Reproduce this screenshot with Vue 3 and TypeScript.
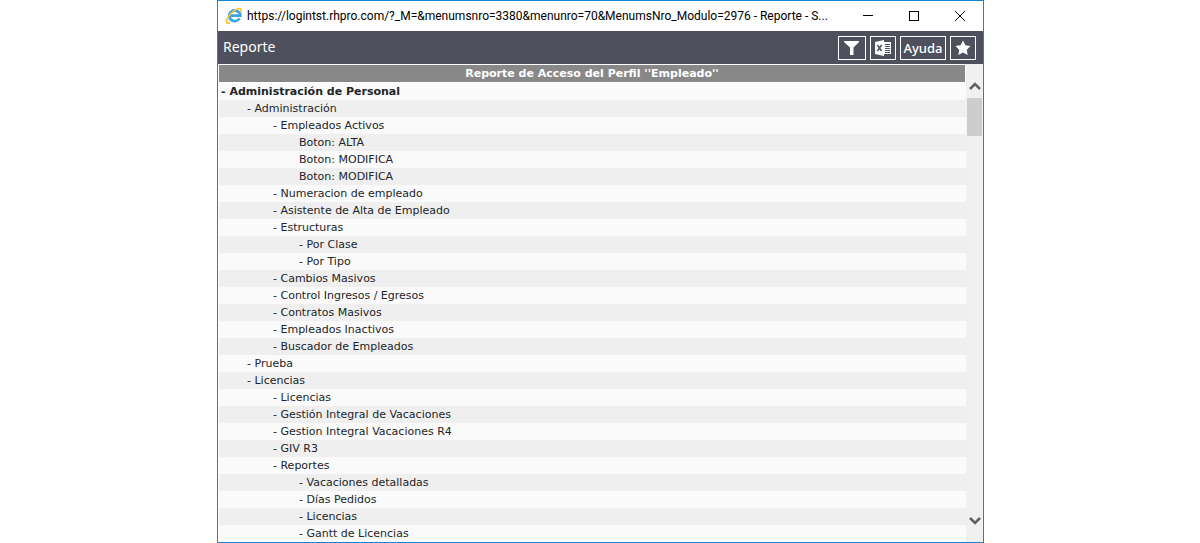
<script setup lang="ts">
interface Row {
  text: string
  level: number
  button?: boolean
}

const rows: Row[] = [
  { text: 'Administración de Personal', level: 0 },
  { text: 'Administración', level: 1 },
  { text: 'Empleados Activos', level: 2 },
  { text: 'Boton: ALTA', level: 3, button: true },
  { text: 'Boton: MODIFICA', level: 3, button: true },
  { text: 'Boton: MODIFICA', level: 3, button: true },
  { text: 'Numeracion de empleado', level: 2 },
  { text: 'Asistente de Alta de Empleado', level: 2 },
  { text: 'Estructuras', level: 2 },
  { text: 'Por Clase', level: 3 },
  { text: 'Por Tipo', level: 3 },
  { text: 'Cambios Masivos', level: 2 },
  { text: 'Control Ingresos / Egresos', level: 2 },
  { text: 'Contratos Masivos', level: 2 },
  { text: 'Empleados Inactivos', level: 2 },
  { text: 'Buscador de Empleados', level: 2 },
  { text: 'Prueba', level: 1 },
  { text: 'Licencias', level: 1 },
  { text: 'Licencias', level: 2 },
  { text: 'Gestión Integral de Vacaciones', level: 2 },
  { text: 'Gestion Integral Vacaciones R4', level: 2 },
  { text: 'GIV R3', level: 2 },
  { text: 'Reportes', level: 2 },
  { text: 'Vacaciones detalladas', level: 3 },
  { text: 'Días Pedidos', level: 3 },
  { text: 'Licencias', level: 3 },
  { text: 'Gantt de Licencias', level: 3 },
]
</script>

<template>
  <div class="page">
    <section class="window">
      <header class="titlebar">
        <svg class="logo" viewBox="0 0 18 18" aria-hidden="true">
          <path d="M14.600 11.400a5.600 5.300 0 1 1 .7-2.700H5.500" fill="none" stroke="#3aa5e6" stroke-width="2.800" />
          <path d="M5 15.800C2.400 17 .8 16 1.600 13.200 2.800 8.800 9 2.800 13.600 1.600c2.400-.6 3 1 2.200 3.600" fill="none" stroke="#f6c52e" stroke-width="1.600" />
        </svg>
        <span class="address">https://logintst.rhpro.com/?_M=&amp;menumsnro=3380&amp;menunro=70&amp;MenumsNro_Modulo=2976 - Reporte - S...</span>
        <div class="controls">
          <button type="button" aria-label="Minimizar">
            <svg viewBox="0 0 12 12" shape-rendering="crispEdges"><path d="M1 5.500h10" /></svg>
          </button>
          <button type="button" aria-label="Maximizar">
            <svg viewBox="0 0 12 12" shape-rendering="crispEdges"><path d="M1.500 1.500h9v9h-9z" /></svg>
          </button>
          <button type="button" aria-label="Cerrar">
            <svg viewBox="0 0 12 12"><path d="M1 1l10 10M11 1L1 11" /></svg>
          </button>
        </div>
      </header>

      <div class="toolbar">
        <h1>Reporte</h1>
        <div class="actions">
          <button class="action filter" type="button" aria-label="Filtro">
            <svg viewBox="0 0 16 16"><path d="M0 1h15v1L9.500 7.500V15H6V7.500L0 2z" fill="#fff" /></svg>
          </button>
          <button class="action" type="button" aria-label="Excel">
            <svg viewBox="0 0 16 16">
              <path d="M0 2l9-2v16l-9-2z" fill="#fff" />
              <path d="M9 2h7v12H9z" fill="#fff" />
              <path d="M10 4.500h5M10 6.500h5M10 8.500h5M10 10.500h5M10 12.500h5" stroke="#4e515d" />
              <path d="M2.500 5l4 6M6.500 5l-4 6" stroke="#4e515d" stroke-width="1.500" />
            </svg>
          </button>
          <button class="action help" type="button">Ayuda</button>
          <button class="action" type="button" aria-label="Favorito">
            <svg viewBox="0 0 16 16"><path d="M8 .5l2.400 4.800 5.200.8-3.800 3.700.9 5.200L8 12.500 3.300 15l.9-5.200L.4 6.100l5.200-.8z" fill="#fff" /></svg>
          </button>
        </div>
      </div>

      <main class="content">
        <table class="report">
          <thead>
            <tr><th scope="col">Reporte de Acceso del Perfil ''Empleado''</th></tr>
          </thead>
          <tbody>
            <tr v-for="(row, i) in rows" :key="i">
              <td :class="`level-${row.level}`"><template v-if="!row.button">- </template>{{ row.text }}</td>
            </tr>
          </tbody>
        </table>
        <div class="scrollbar">
          <button type="button" aria-label="Subir">
            <svg viewBox="0 0 12 10"><path d="M1 8l5-5 5 5" /></svg>
          </button>
          <div class="thumb"></div>
          <button class="down" type="button" aria-label="Bajar">
            <svg viewBox="0 0 12 10"><path d="M1 2l5 5 5-5" /></svg>
          </button>
        </div>
      </main>
    </section>
  </div>
</template>

<style>
body {
  margin: 0;
  background: #fff;
}
</style>

<style scoped>
.page {
  box-sizing: border-box;
  height: 100vh;
  padding: 0 216px 0 217px;
}
.window {
  box-sizing: border-box;
  display: flex;
  flex-direction: column;
  height: 100%;
  border: 1px solid #1883d7;
  overflow: hidden;
  background: #fff;
}
button {
  padding: 0;
  border: 0;
  background: none;
  font: inherit;
  color: inherit;
}
svg {
  display: block;
}
.titlebar {
  display: flex;
  flex: none;
  align-items: center;
  height: 30px;
  padding-left: 7px;
  color: #000;
  font: 12px/16px Roboto, sans-serif;
}
.logo {
  flex: none;
  width: 18px;
  height: 18px;
  margin-right: 4px;
}
.address {
  flex: 1;
  min-width: 0;
  white-space: nowrap;
}
.controls {
  display: flex;
  flex: none;
}
.controls button {
  display: grid;
  place-items: center;
  width: 46px;
  height: 30px;
}
.controls svg {
  width: 12px;
  height: 12px;
  fill: none;
  stroke: #000;
}
.toolbar {
  display: flex;
  flex: none;
  align-items: center;
  justify-content: space-between;
  height: 33px;
  padding: 0 7px 0 5px;
  background: #4e515d;
  color: #fff;
  font: 14px/20px "Noto Sans", sans-serif;
}
h1 {
  margin: 0;
  padding-bottom: 2px;
  font: inherit;
}
.actions {
  display: flex;
  gap: 4px;
}
.action {
  box-sizing: border-box;
  display: grid;
  place-items: center;
  width: 26px;
  height: 24px;
  border: 1px solid #fff;
}
.action svg {
  width: 16px;
  height: 16px;
}
.filter {
  width: 28px;
}
.help {
  width: 46px;
  font: 500 13px/20px "Noto Sans", sans-serif;
}
.content {
  display: flex;
  flex: 1;
  align-items: stretch;
  min-height: 0;
  overflow: hidden;
}
.report {
  flex: 1;
  align-self: flex-start;
  border-collapse: separate;
  border-spacing: 0;
  margin: 1px 0 0 1px;
  color: #212529;
  font: 11px/17px "DejaVu Sans", Verdana, sans-serif;
}
th {
  padding: 0;
  border-right: 1px solid #fff;
  border-bottom: 1px solid #fff;
  background: #888;
  color: #fff;
  font-weight: bold;
}
td {
  padding: 0 0 0 2px;
  background: #fafafa;
}
tr:nth-child(even) td {
  background: #efefef;
}
.level-0 {
  font-weight: bold;
}
td.level-1 {
  padding-left: 28px;
}
td.level-2 {
  padding-left: 54px;
}
td.level-3 {
  padding-left: 80px;
}
.scrollbar {
  display: flex;
  flex: none;
  flex-direction: column;
  width: 17px;
  padding: 13px 0;
  box-sizing: border-box;
  background: #f0f0f0;
}
.scrollbar button {
  display: grid;
  place-items: center;
  height: 17px;
}
.scrollbar svg {
  width: 12px;
  height: 10px;
  fill: none;
  stroke: #606060;
  stroke-width: 2.500;
}
.thumb {
  height: 38px;
  margin: 4px 1px 0;
  background: #cdcdcd;
}
.scrollbar .down {
  margin-top: auto;
}
</style>
